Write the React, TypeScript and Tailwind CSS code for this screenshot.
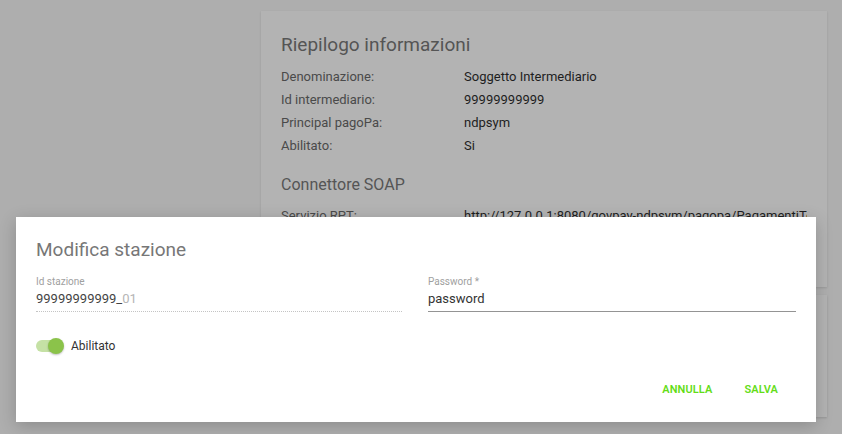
import React from 'react';

const rows: [string, string][] = [
  ['Denominazione:', 'Soggetto Intermediario'],
  ['Id intermediario:', '99999999999'],
  ['Principal pagoPa:', 'ndpsym'],
  ['Abilitato:', 'Si'],
];

function InfoRow({ label, value }: { label: string; value: string }) {
  return (
    <div className="flex h-[23px] items-center text-[13px]">
      <span className="w-[183px] shrink-0 text-[#4a4a4a]">{label}</span>
      <span className="min-w-0 overflow-hidden whitespace-nowrap text-[#1e1e1e]">{value}</span>
    </div>
  );
}

function Toggle() {
  return (
    <div className="relative h-[16px] w-[28px]">
      <div className="absolute left-0 top-[2px] h-[12px] w-[26px] rounded-full bg-[#c5e1a5]" />
      <div className="absolute right-0 top-0 h-[16px] w-[16px] rounded-full bg-[#8bc34a] shadow-[0_1px_2px_rgba(0,0,0,0.25)]" />
    </div>
  );
}

export default function App() {
  return (
    <div
      className="relative h-[434px] w-full overflow-hidden bg-[#aeaeae]"
      style={{ fontFamily: 'Roboto, "Liberation Sans", sans-serif' }}
    >
      <div className="flex flex-col gap-[8px] pl-[261px] pr-[15px] pt-[11px]">
        <div className="h-[276px] overflow-hidden bg-[#b3b3b3] px-[20px] pt-[20px] shadow-[0_1px_2px_rgba(0,0,0,0.12)]">
          <h2 className="mb-[6px] text-[19px] leading-[28px] text-[#555555]">Riepilogo informazioni</h2>
          {rows.map(([l, v]) => (
            <InfoRow key={l} label={l} value={v} />
          ))}
          <h3 className="mt-[16px] text-[16px] leading-[24px] text-[#555555]">Connettore SOAP</h3>
          <div className="mt-[7px]">
            <InfoRow label="Servizio RPT:" value="http://127.0.0.1:8080/govpay-ndpsym/pagopa/PagamentiTelematiciRPTservice" />
          </div>
        </div>
        <div className="h-[122px] bg-[#b3b3b3] shadow-[0_1px_2px_rgba(0,0,0,0.15)]" />
      </div>

      <div className="absolute left-[16px] top-[217px] flex h-[205px] w-[800px] flex-col bg-white px-[20px] pt-[19px] shadow-[0_4px_16px_rgba(0,0,0,0.2)]">
        <h1 className="text-[19px] leading-[28px] text-[#777777]">Modifica stazione</h1>
        <div className="mt-[11px] flex gap-[26px]">
          <div className="w-[366px]">
            <div className="text-[10px] leading-[14px] text-[#a0a0a0]">Id stazione</div>
            <div className="border-b border-dotted border-[#c4c4c4] pb-[2px] text-[13px] leading-[20px]">
              <span className="text-[#444444]">99999999999_</span>
              <span className="text-[#b5b5b5]">01</span>
            </div>
          </div>
          <div className="flex-1">
            <div className="text-[10px] leading-[14px] text-[#a0a0a0]">Password *</div>
            <div className="border-b border-[#949494] pb-[2px] text-[13px] leading-[20px] text-[#333333]">password</div>
          </div>
        </div>
        <div className="mt-[25px] flex items-center gap-[7px]">
          <Toggle />
          <span className="text-[12px] text-[#333333]">Abilitato</span>
        </div>
        <div className="mt-[27px] flex justify-end gap-[32px] pr-[18px]">
          <button className="text-[11px] font-semibold tracking-[0.1px] text-[#64dd17]">ANNULLA</button>
          <button className="text-[11px] font-semibold tracking-[0.1px] text-[#64dd17]">SALVA</button>
        </div>
      </div>
    </div>
  );
}
